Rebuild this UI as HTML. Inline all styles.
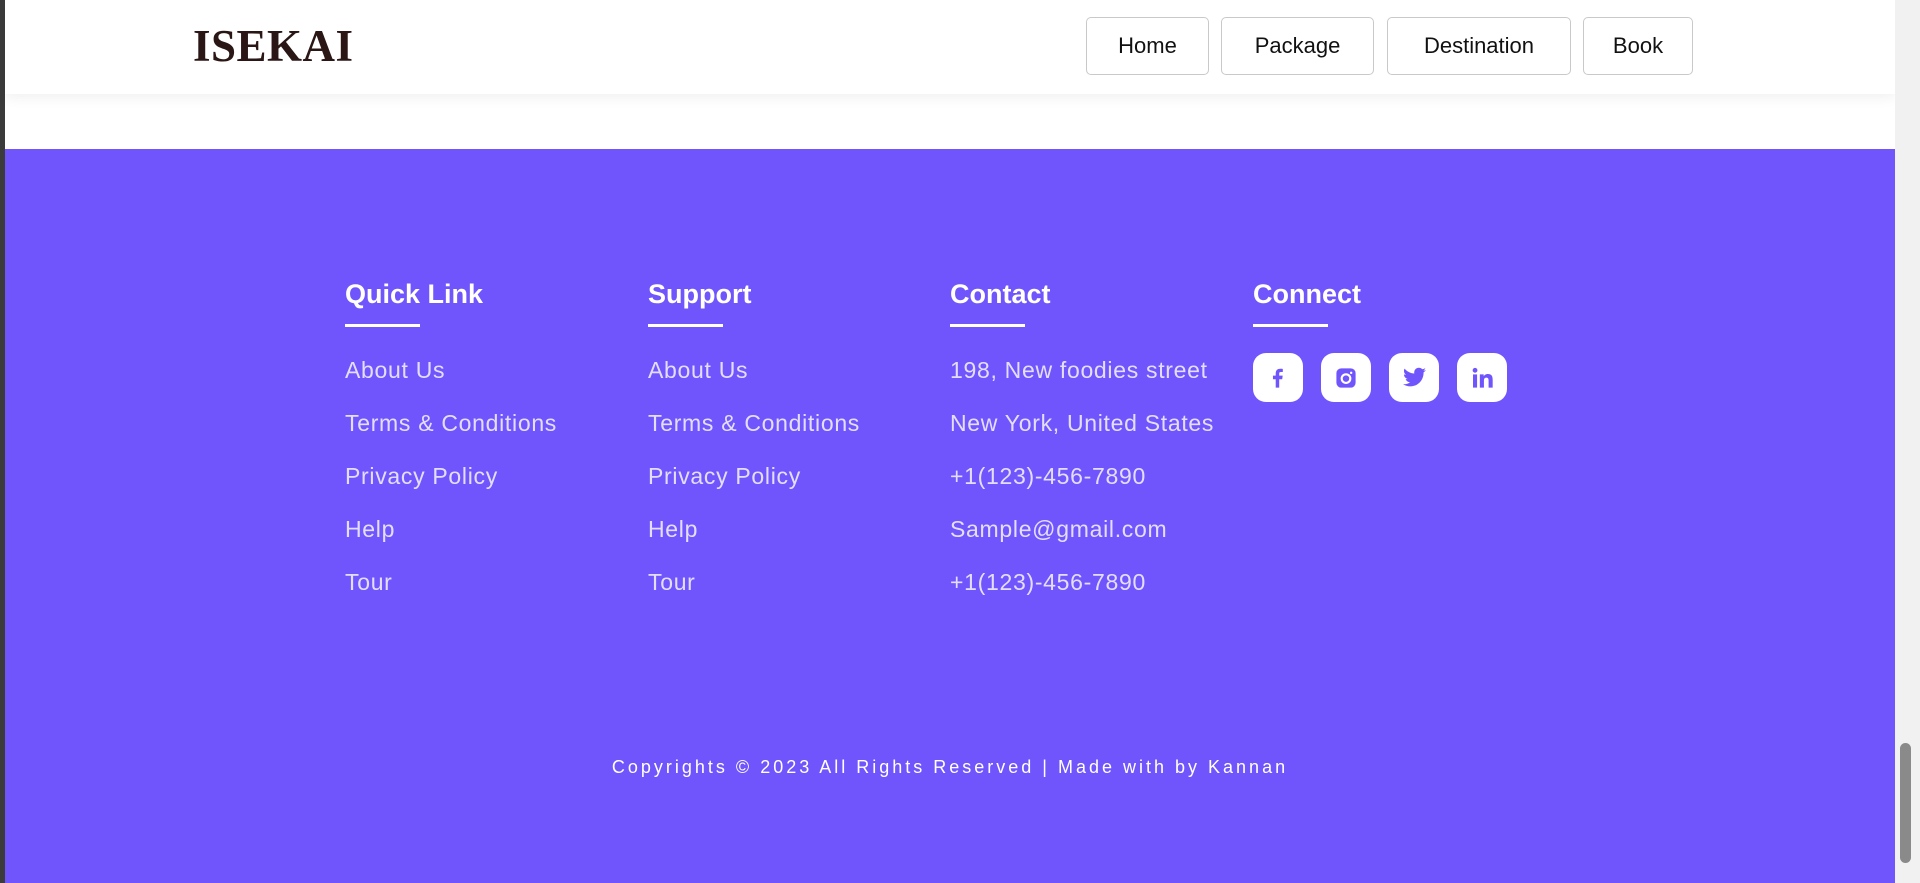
<!DOCTYPE html>
<html><head><meta charset="utf-8"><style>
*{margin:0;padding:0;box-sizing:border-box}
html,body{width:1920px;height:883px;overflow:hidden;background:#3b3b3b;font-family:"Liberation Sans",sans-serif}
.page{position:absolute;left:5px;top:0;width:1890px;height:883px;background:#fff}
.sb{position:absolute;left:1895px;top:0;width:25px;height:883px;background:#f1f1f1}
.sb .th{position:absolute;left:5px;top:743px;width:11px;height:120px;background:#8a8a8a;border-radius:6px}
header{position:absolute;left:0;top:0;width:1890px;height:94px;background:#fff;box-shadow:0 4px 12px rgba(0,0,0,.06)}
.logo{position:absolute;left:188px;top:20px;font-family:"Liberation Serif",serif;font-weight:bold;font-size:45px;color:#2a1614;letter-spacing:0.5px}
.btn{position:absolute;top:17px;height:58px;border:1px solid #c9c9c9;border-radius:5px;font-size:22px;color:#111;display:flex;align-items:center;justify-content:center;background:#fff}
footer{position:absolute;left:0;top:149px;width:1890px;height:734px;background:#7055fc}
.col{position:absolute;top:128px}
.col h3{font-size:27px;font-weight:bold;color:#fff;line-height:34px}
.col .ul{width:75px;height:3px;background:#fff;margin-top:13px}
.col a{display:block;position:absolute;left:0;font-size:23px;letter-spacing:0.7px;color:#e4defe;white-space:nowrap;text-decoration:none}
.ic{position:absolute;top:204px;width:50px;height:49px;background:#fff;border-radius:13px;display:flex;align-items:center;justify-content:center}
.copy{position:absolute;top:608px;left:0;width:1890px;text-align:center;font-size:18px;color:#fff;letter-spacing:3px}
</style></head><body>
<div class="page">
<header>
<div class="logo">ISEKAI</div>
<div class="btn" style="left:1081px;width:123px">Home</div>
<div class="btn" style="left:1216px;width:153px">Package</div>
<div class="btn" style="left:1382px;width:184px">Destination</div>
<div class="btn" style="left:1578px;width:110px">Book</div>
</header>
<footer>
<div class="col" style="left:340px"><h3>Quick Link</h3><div class="ul"></div>
<a style="top:80px">About Us</a><a style="top:133px">Terms &amp; Conditions</a><a style="top:186px">Privacy Policy</a><a style="top:239px">Help</a><a style="top:292px">Tour</a></div>
<div class="col" style="left:643px"><h3>Support</h3><div class="ul"></div>
<a style="top:80px">About Us</a><a style="top:133px">Terms &amp; Conditions</a><a style="top:186px">Privacy Policy</a><a style="top:239px">Help</a><a style="top:292px">Tour</a></div>
<div class="col" style="left:945px"><h3>Contact</h3><div class="ul"></div>
<a style="top:80px">198, New foodies street</a><a style="top:133px">New York, United States</a><a style="top:186px">+1(123)-456-7890</a><a style="top:239px">Sample@gmail.com</a><a style="top:292px">+1(123)-456-7890</a></div>
<div class="col" style="left:1248px;top:128px"><h3>Connect</h3><div class="ul"></div></div>
<div class="ic" style="left:1248px"><svg width="24" height="24" viewBox="0 0 20 20"><path d="M11 18V11h2.5l.4-3H11V6.3c0-.8.3-1.3 1.4-1.3H14V2.4c-.3 0-1.2-.1-2.2-.1-2.2 0-3.7 1.3-3.7 3.8V8H5.8v3h2.3v7z" fill="#7055fc"/></svg></div>
<div class="ic" style="left:1316px"><svg width="24" height="24" viewBox="0 0 20 20"><rect x="2" y="2" width="16" height="16" rx="4" fill="#7055fc"/><circle cx="10" cy="10.5" r="3.6" fill="none" stroke="#fff" stroke-width="1.8"/><circle cx="14.3" cy="5.7" r="1" fill="#fff"/></svg></div>
<div class="ic" style="left:1384px"><svg width="25" height="22" viewBox="0 0 24 20"><path d="M23 2.3c-.8.4-1.7.6-2.6.7.9-.6 1.600-1.4 2-2.5-.9.5-1.900.9-2.900 1.100C18.700.7 17.500.2 16.200.2c-2.500 0-4.500 2-4.500 4.500 0 .4 0 .7.1 1C8 5.500 4.700 3.700 2.500 1 2.100 1.700 1.900 2.400 1.900 3.300c0 1.600.8 2.900 2 3.700-.7 0-1.400-.2-2-.6v.1c0 2.200 1.600 4 3.600 4.400-.4.1-.8.2-1.200.2-.3 0-.6 0-.8-.1.6 1.800 2.200 3.100 4.200 3.100-1.500 1.200-3.500 1.900-5.600 1.900H1c2 1.300 4.400 2 6.900 2 8.300 0 12.800-6.900 12.800-12.800v-.6c.9-.6 1.600-1.400 2.300-2.300z" fill="#7055fc"/></svg></div>
<div class="ic" style="left:1452px"><svg width="24" height="24" viewBox="0 0 20 20"><rect x="2.5" y="7" width="3.4" height="11" fill="#7055fc"/><circle cx="4.2" cy="3.6" r="2" fill="#7055fc"/><path d="M8.2 7h3.2v1.6c.5-.9 1.7-1.9 3.5-1.9 3.4 0 4 2.2 4 5.1V18h-3.4v-5.4c0-1.3 0-2.9-1.8-2.9s-2.1 1.4-2.1 2.8V18H8.2z" fill="#7055fc"/></svg></div>
<div class="copy">Copyrights © 2023 All Rights Reserved | Made with by Kannan</div>
</footer>
</div>
<div class="sb"><div class="th"></div></div>
</body></html>
